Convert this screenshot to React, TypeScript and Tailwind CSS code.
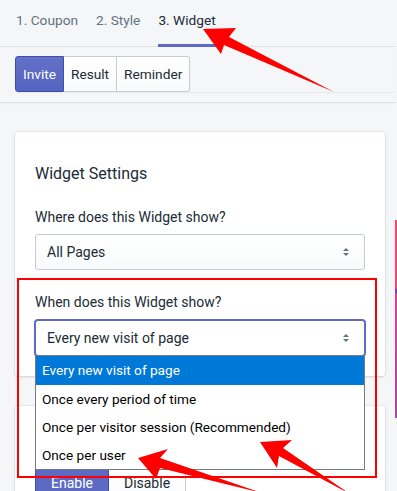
import React from "react";

const font = { fontFamily: 'Roboto, "Open Sans", sans-serif' };

function Chevron() {
  return (
    <svg width="8" height="12" viewBox="0 0 8 12" className="absolute right-[14px] top-1/2 -translate-y-1/2">
      <path d="M4 2 L7 5 H1 Z" fill="#637381" />
      <path d="M4 10 L7 7 H1 Z" fill="#637381" />
    </svg>
  );
}

export default function App() {
  return (
    <div className="relative w-[397px] h-[491px] overflow-hidden bg-[#f4f6f8] text-[#212b36]" style={font}>
      <div className="flex">
        <div className="w-[395px] shrink-0">
          {/* tabs */}
          <div className="flex h-[47px] border-b border-[#dfe3e8] pl-4 gap-[18px] text-[13.7px] whitespace-nowrap">
            <div className="pt-[10px] text-[#637381]">1. Coupon</div>
            <div className="pt-[10px] text-[#637381]">2. Style</div>
            <div className="pt-[10px] text-[#212b36] border-b-[3px] border-[#5c6ac4] h-[47px] -mb-px">3. Widget</div>
          </div>
          {/* button group */}
          <div className="h-[56px] border-b border-[#dfe3e8] pl-[15px] pt-[9px] shadow-[0_1px_2px_rgba(0,0,0,0.04)]">
            <div className="flex h-[36px] text-[13.7px] rounded-[3px] shadow-[0_1px_0_rgba(22,29,37,0.05)]">
              <div className="flex items-center px-[7px] rounded-l-[3px] border border-[#3f4eae] bg-gradient-to-b from-[#6371c7] to-[#5563c1] text-white">Invite</div>
              <div className="flex items-center px-[7px] border-y border-r border-[#c4cdd5] bg-gradient-to-b from-white to-[#f9fafb]">Result</div>
              <div className="flex items-center px-[7px] rounded-r-[3px] border-y border-r border-[#c4cdd5] bg-gradient-to-b from-white to-[#f9fafb]">Reminder</div>
            </div>
          </div>
          {/* card 1 */}
          <div className="mt-[29px] ml-[15px] w-[370px] h-[244px] bg-white rounded-[3px] shadow-[0_0_0_1px_rgba(63,63,68,0.05),0_1px_3px_0_rgba(63,63,68,0.15)] px-[20px] pt-[30px]">
            <div className="text-[16px] leading-[24px]">Widget Settings</div>
            <div className="mt-[21px] text-[14px] leading-[20px]">Where does this Widget show?</div>
            <div className="relative mt-[7px] h-[36px] rounded-[3px] border border-[#c4cdd5] bg-gradient-to-b from-white to-[#f9fafb] flex items-center pl-[11px] text-[14px]">
              All Pages
              <Chevron />
            </div>
            <div className="mt-[22px] text-[14px] leading-[20px]">When does this Widget show?</div>
            <div className="relative mt-[8px] h-[36px] rounded-[3px] border border-[#5c6ac4] shadow-[0_0_0_1px_#5c6ac4] bg-white flex items-center pl-[11px] text-[14px]">
              Every new visit of page
              <Chevron />
            </div>
          </div>
          {/* card 2 */}
          <div className="mt-[30px] ml-[15px] w-[370px] h-[120px] bg-white rounded-[3px] shadow-[0_0_0_1px_rgba(63,63,68,0.05),0_1px_3px_0_rgba(63,63,68,0.15)] px-[20px] pt-[59px]">
            <div className="flex h-[36px] text-[14px]">
              <div className="flex items-center justify-center w-[74px] rounded-l-[3px] border border-[#3f4eae] bg-[#5c6ac4] text-white">Enable</div>
              <div className="flex items-center justify-center w-[77px] rounded-r-[3px] border-y border-r border-[#c4cdd5] bg-gradient-to-b from-white to-[#f9fafb]">Disable</div>
            </div>
          </div>
        </div>
        <div className="w-[2px] mt-[220px] flex flex-col">
          <div className="h-[69px] bg-gradient-to-b from-[#f24a6c] to-[#ea4477]" />
          <div className="h-[4px] bg-[#6b46c1]" />
          <div className="h-[125px] bg-gradient-to-b from-[#d93f98] to-[#a04b9f]" />
        </div>
      </div>

      {/* native dropdown popup */}
      <div className="absolute left-[35px] top-[355px] w-[330px] border border-[#7a7a7a] bg-white text-[13.6px] text-black">
        <div className="h-[29px] flex items-center pl-[6px] bg-[#0078d7] text-white">Every new visit of page</div>
        <div className="h-[28px] flex items-center pl-[6px]">Once every period of time</div>
        <div className="h-[28px] flex items-center pl-[6px]">Once per visitor session (Recommended)</div>
        <div className="h-[28px] flex items-center pl-[6px]">Once per user</div>
      </div>

      {/* annotations */}
      <div className="absolute left-[17px] top-[278px] w-[360px] h-[200px] border-2 border-[#ff0000]" />
      <svg className="absolute left-0 top-0" width="397" height="491" viewBox="0 0 397 491">
        <polygon points="203,29 236,28 229,37 334,92 224,45 221,54" fill="#ff0000" />
        <polygon points="138,458 168,449 160,458 262,493 160,468 156,479" fill="#ff0000" />
        <polygon points="260,442 292,440 283,448 350,494 279,456 277,468" fill="#ff0000" />
      </svg>
    </div>
  );
}
